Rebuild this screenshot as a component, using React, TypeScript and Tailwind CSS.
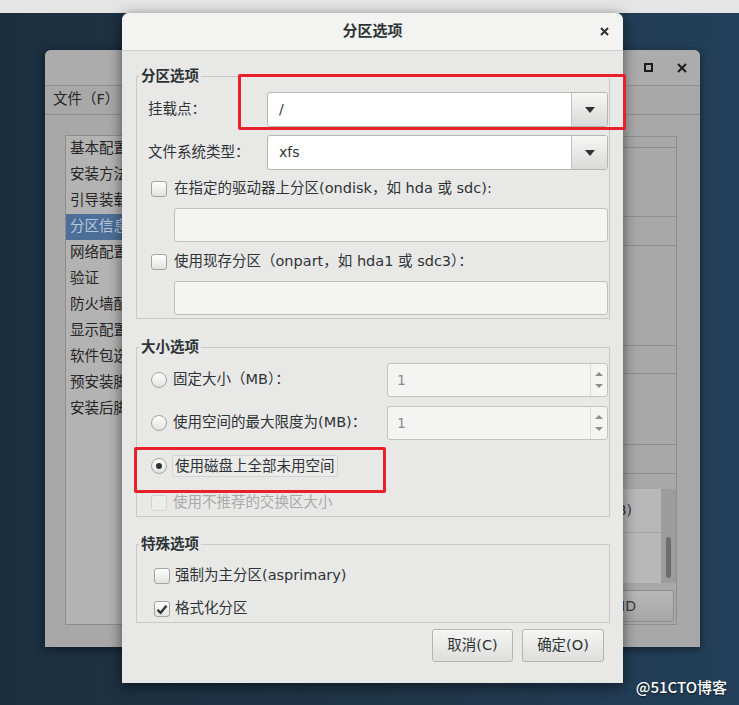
import React from "react";

const ui = "font-['DejaVu_Sans','Noto_Sans_CJK_SC',sans-serif]";

const navItems = [
  "基本配置",
  "安装方法",
  "引导装载程序选项",
  "分区信息",
  "网络配置",
  "验证",
  "防火墙配置",
  "显示配置",
  "软件包选择",
  "预安装脚本",
  "安装后脚本",
];

const Check = ({ checked = false, disabled = false }: { checked?: boolean; disabled?: boolean }) => (
  <span
    className={`flex h-[16px] w-[16px] shrink-0 items-center justify-center rounded-[3px] border ${
      disabled ? "border-[#d3d3d1] bg-[#ececeb]" : "border-[#a3a3a1] bg-linear-to-b from-white to-[#e2e2e0]"
    }`}
  >
    {checked && (
      <svg width="12" height="11" viewBox="0 0 12 11">
        <path d="M1.5 5.8 L4.6 8.8 L10.5 1.8" fill="none" stroke="#2e3436" strokeWidth="2.4" />
      </svg>
    )}
  </span>
);

const Radio = ({ checked = false }: { checked?: boolean }) => (
  <span className="flex h-[16px] w-[16px] shrink-0 items-center justify-center rounded-full border border-[#a3a3a1] bg-linear-to-b from-white to-[#e2e2e0]">
    {checked && <span className="h-[6px] w-[6px] rounded-full bg-[#2e3436]" />}
  </span>
);

const Combo = ({ value }: { value: string }) => (
  <div className="flex h-[35px] flex-1 overflow-hidden rounded-[3px] border border-[#b5b5b2] bg-white">
    <div className="flex flex-1 items-center pl-[11px] text-[14px] text-[#2e3436]">{value}</div>
    <div className="flex w-[36px] items-center justify-center border-l border-[#c2c2bf] bg-linear-to-b from-[#f6f6f5] to-[#dadad8]">
      <svg width="10" height="6" viewBox="0 0 10 6">
        <path d="M0 0 H10 L5 6 Z" fill="#2e3436" />
      </svg>
    </div>
  </div>
);

const Entry = () => (
  <div className="ml-[26px] h-[34px] rounded-[3px] border border-[#bfbfbc] bg-[#f4f4f3]" />
);

const Spin = () => (
  <div className="ml-auto flex h-[34px] w-[221px] shrink-0 overflow-hidden rounded-[3px] border border-[#c3c3c0] bg-[#f4f4f3]">
    <div className="flex flex-1 items-center pl-[9px] font-['DejaVu_Sans_Mono',monospace] text-[14px] text-[#8c8c8a]">1</div>
    <div className="flex w-[17px] flex-col items-center justify-center gap-[8px] border-l border-[#dcdcda]">
      <svg width="8" height="4" viewBox="0 0 8 4">
        <path d="M0 4 H8 L4 0 Z" fill="#8c8c8a" />
      </svg>
      <svg width="8" height="4" viewBox="0 0 8 4">
        <path d="M0 0 H8 L4 4 Z" fill="#8c8c8a" />
      </svg>
    </div>
  </div>
);

const Frame = ({ label, className = "", children }: { label: string; className?: string; children: React.ReactNode }) => (
  <fieldset className={`border border-[#c9c9c6] ${className}`}>
    <legend className="ml-[2px] px-[2px] text-[14.5px] leading-[20px] font-bold text-[#2e3436]">{label}</legend>
    {children}
  </fieldset>
);

const Btn = ({ children, w }: { children: React.ReactNode; w: string }) => (
  <button
    className={`${w} h-[33px] rounded-[3px] border border-[#b3b3b0] bg-linear-to-b from-[#f5f5f4] to-[#dededc] text-[14.5px] text-[#2e3436] shadow-[0_1px_0_rgba(255,255,255,0.8)_inset]`}
  >
    {children}
  </button>
);

export default function App() {
  return (
    <div className={`relative h-[705px] w-[739px] overflow-hidden bg-linear-to-r from-[#1b2f3f] via-[#1f3548] to-[#23405a] ${ui}`}>
      <div className="h-[13px] bg-[#e5e5e5]" />

      {/* background window, dimmed by the modal */}
      <div className="absolute left-[45px] top-[50px] flex h-[597px] w-[655px] flex-col rounded-t-[6px] bg-[#a8a8a8] shadow-[0_2px_8px_rgba(0,0,0,0.5)]">
        <div className="flex h-[36px] items-center justify-end gap-[24px] rounded-t-[6px] border-b border-[#8e8e8e] bg-[#acacac] pr-[13px]">
          <span className="h-[9px] w-[9px] border-[2px] border-[#1c1c1c]" />
          <svg width="10" height="10" viewBox="0 0 10 10">
            <path d="M1 1 L9 9 M9 1 L1 9" stroke="#1c1c1c" strokeWidth="2" />
          </svg>
        </div>
        <div className="flex h-[29px] items-center border-b border-[#8e8e8e] pl-[8px] text-[14.5px] text-[#262626]">文件（F）</div>
        <div className="flex pl-[20px] pr-[23px] pt-[20px]">
          <div className="h-[490px] w-[230px] border border-[#8c8c8c] bg-[#b3b3b3]">
            {navItems.map((t, i) => (
              <div
                key={t}
                className={`flex h-[26px] items-center whitespace-nowrap pl-[4px] text-[14.5px] ${
                  i === 3 ? "bg-[#4c6e98] text-[#b9c8da]" : "text-[#262626]"
                }`}
              >
                {t}
              </div>
            ))}
          </div>
          <div className="mt-px flex h-[489px] flex-1 flex-col border border-[#8e8e8e] text-[14px] text-[#3a3a3a]">
            <div className="h-[11px] border-b border-[#8e8e8e]" />
            <div className="h-[69px] border-b border-[#8e8e8e]" />
            <div className="h-[29px] border-b border-[#8e8e8e]" />
            <div className="h-[100px] border-b border-[#8e8e8e]" />
            <div className="h-[28px] border-b border-[#8e8e8e]" />
            <div className="h-[71px] border-b border-[#8e8e8e]" />
            <div className="h-[29px] border-b border-[#8e8e8e]" />
            <div className="h-[15px]" />
            <div className="flex h-[94px] bg-[#b8b8b8]">
              <div className="flex flex-1 flex-col">
                <div className="flex h-[44px] items-center justify-end border-b border-[#a3a3a3] pr-[29px]">(MB)</div>
              </div>
              <div className="flex w-[15px] justify-center bg-[#9c9c9c] pt-[48px]">
                <div className="h-[41px] w-[5px] rounded-full bg-[#6d6d6d]" />
              </div>
            </div>
            <div className="h-[7px]" />
            <div className="mr-[2px] flex h-[32px] items-center justify-end rounded-[3px] border border-[#8e8e8e] bg-linear-to-b from-[#b8b8b8] to-[#a6a6a6] pr-[37px] text-[#3a3a3a]">
              RAID
            </div>
          </div>
        </div>
      </div>

      {/* modal dialog */}
      <div className="absolute left-[122px] top-[13px] flex h-[670px] w-[501px] flex-col rounded-t-[7px] bg-[#e8e8e7] shadow-[0_3px_14px_rgba(0,0,0,0.55)]">
        <div className="grid h-[38px] grid-cols-[1fr_auto_1fr] items-center rounded-t-[7px] border-b border-[#cfcfcd] bg-[#f3f3f2]">
          <span />
          <span className="text-[15px] font-bold text-[#2e3436]">分区选项</span>
          <span className="flex justify-end pr-[14px]">
            <svg width="9" height="9" viewBox="0 0 9 9">
              <path d="M1 1 L8 8 M8 1 L1 8" stroke="#2e3436" strokeWidth="2" />
            </svg>
          </span>
        </div>

        <div className="flex flex-col pl-[14px] pr-[13px] pt-[15px] text-[14.5px] text-[#2e3436]">
          <Frame label="分区选项">
            <div className="flex flex-col pb-[3px] pl-[11px] pr-px pt-[6px]">
              <div className="flex h-[35px] items-center">
                <span className="w-[119px]">挂载点：</span>
                <Combo value="/" />
              </div>
              <div className="mt-[8px] flex h-[35px] items-center">
                <span className="w-[119px]">文件系统类型：</span>
                <Combo value="xfs" />
              </div>
              <div className="flex h-[38px] items-center gap-[7px] pl-[3px]">
                <Check />
                <span>在指定的驱动器上分区(ondisk，如 hda 或 sdc):</span>
              </div>
              <Entry />
              <div className="flex h-[39px] items-center gap-[7px] pl-[3px]">
                <Check />
                <span>使用现存分区（onpart，如 hda1 或 sdc3）：</span>
              </div>
              <Entry />
            </div>
          </Frame>

          <Frame label="大小选项" className="mt-[18px]">
            <div className="flex flex-col pb-px pl-[14px] pr-px pt-[6px]">
              <div className="flex h-[34px] items-center gap-[6px]">
                <Radio />
                <span>固定大小（MB）：</span>
                <Spin />
              </div>
              <div className="mt-[9px] flex h-[34px] items-center gap-[6px]">
                <Radio />
                <span>使用空间的最大限度为(MB)：</span>
                <Spin />
              </div>
              <div className="mt-[14px] flex h-[24px] items-center gap-[5px]">
                <Radio checked />
                <span className="rounded-[2px] border border-[#d4d4d2] bg-[#ebebea] px-[2px] leading-[20px]">使用磁盘上全部未用空间</span>
              </div>
              <div className="mt-[13px] flex h-[24px] items-center gap-[6px] text-[#aaaaa8]">
                <Check disabled />
                <span>使用不推荐的交换区大小</span>
              </div>
            </div>
          </Frame>

          <Frame label="特殊选项" className="mt-[17px]">
            <div className="flex flex-col pb-px pl-[17px] pt-[10px]">
              <div className="flex h-[24px] items-center gap-[5px]">
                <Check />
                <span>强制为主分区(asprimary)</span>
              </div>
              <div className="mt-[9px] flex h-[24px] items-center gap-[5px]">
                <Check checked />
                <span>格式化分区</span>
              </div>
            </div>
          </Frame>

          <div className="mt-[6px] flex justify-end gap-[9px] pr-[6px]">
            <Btn w="w-[81px]">取消(C)</Btn>
            <Btn w="w-[82px]">确定(O)</Btn>
          </div>
        </div>
      </div>

      {/* red annotation boxes */}
      <div className="absolute left-[238px] top-[74px] h-[56px] w-[388px] rounded-[2px] border-[3px] border-[#e6212a]" />
      <div className="absolute left-[134px] top-[447px] h-[46px] w-[252px] rounded-[2px] border-[3px] border-[#e6212a]" />

      <div className="absolute bottom-[7px] right-[12px] font-['Noto_Sans_CJK_SC',sans-serif] text-[15px] font-medium text-white [text-shadow:0_1px_2px_rgba(0,0,0,0.6)]">
        @51CTO博客
      </div>
    </div>
  );
}
